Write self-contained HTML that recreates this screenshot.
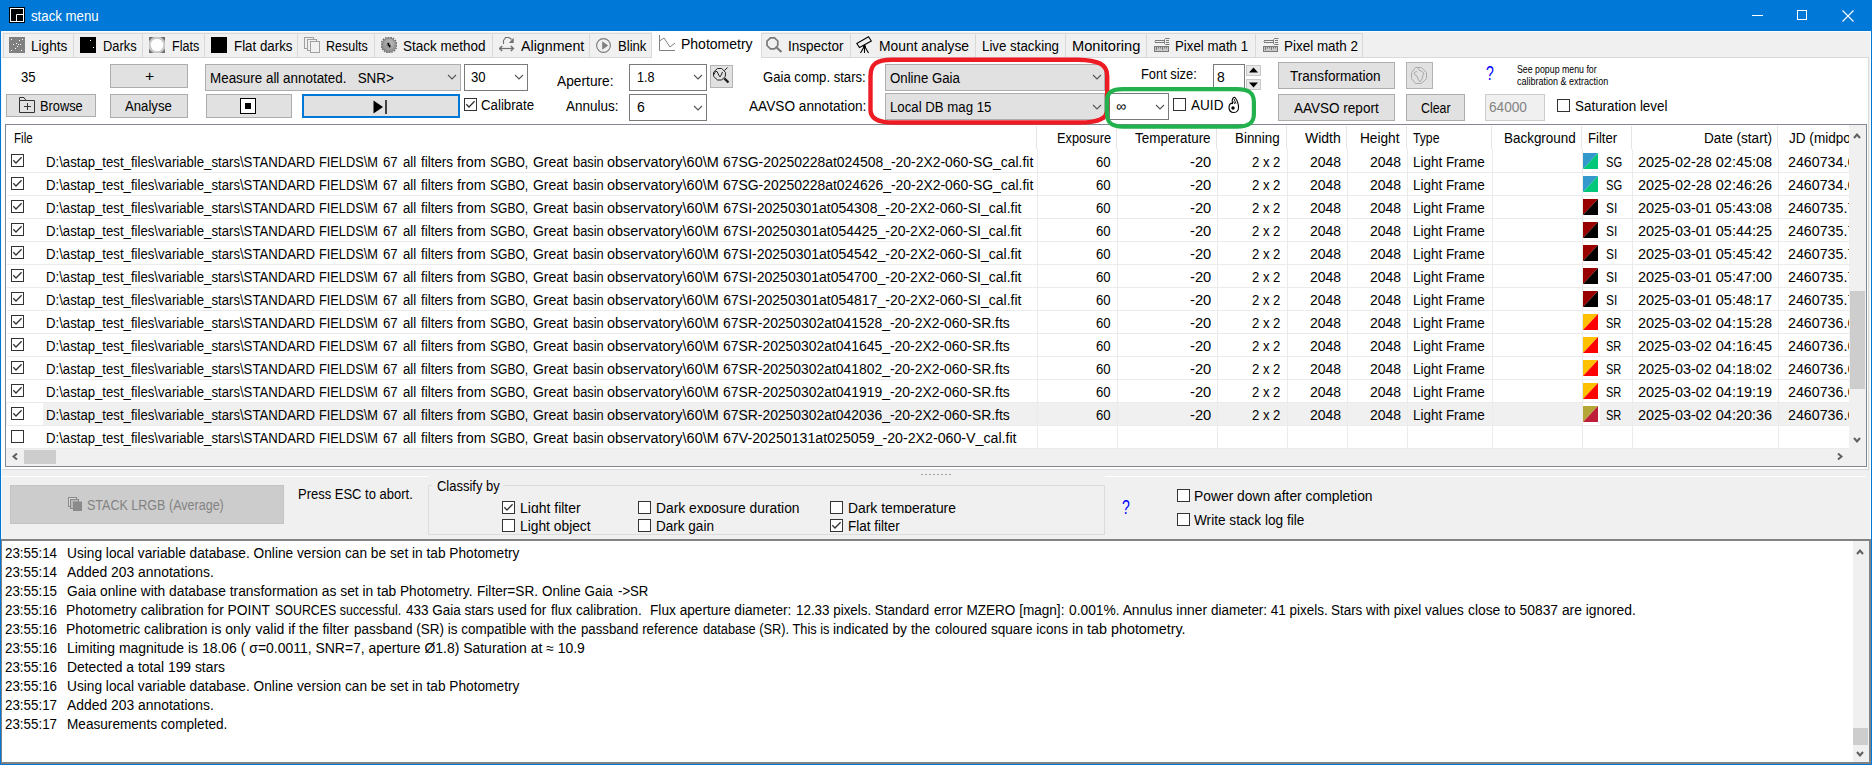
<!DOCTYPE html><html><head><meta charset="utf-8"><style>*{margin:0;padding:0}
html,body{width:1872px;height:765px;overflow:hidden;background:#f0f0f0;position:relative}
div,svg{position:absolute}
.t{white-space:pre;font-family:"Liberation Sans",sans-serif;line-height:normal;transform-origin:0 0}
</style></head><body><div style="left:0px;top:0px;width:1872px;height:31px;background:#0078d7;"></div>
<div style="left:0px;top:31px;width:1px;height:734px;background:#0078d7;"></div>
<div style="left:1871px;top:31px;width:1px;height:734px;background:#0078d7;"></div>
<div style="left:0px;top:764px;width:1872px;height:1px;background:#0078d7;"></div>
<div style="left:1px;top:31px;width:1870px;height:1px;background:#fbfbfb;"></div>
<div style="left:1px;top:31px;width:1px;height:733px;background:#f7f7f7;"></div>
<div style="left:1870px;top:31px;width:1px;height:733px;background:#fbfbfb;"></div>
<svg style="left:9px;top:7px;" width="16" height="16" viewBox="0 0 16 16"><rect x="0" y="0" width="16" height="16" fill="#000"/><rect x="1.5" y="1.5" width="13" height="13" fill="none" stroke="#fff" stroke-width="1"/><path d="M7.5 14.5V7.5H14.5" fill="none" stroke="#fff" stroke-width="1"/></svg>
<div class="t" style="left:31.00px;top:8px;font-size:14px;color:#fff;transform:scaleX(0.9444);">stack menu</div>
<div style="left:1752px;top:15px;width:11px;height:1px;background:#fff;"></div>
<div style="left:1797px;top:10px;width:10px;height:10px;border:1px solid #fff;box-sizing:border-box;"></div>
<svg style="left:1842px;top:10px;" width="12" height="12" viewBox="0 0 12 12"><path d="M0.5 0.5L11.5 11.5M11.5 0.5L0.5 11.5" stroke="#fff" stroke-width="1.1"/></svg>
<div style="left:3px;top:33px;width:71px;height:25px;background:#f0f0f0;border:1px solid #d9d9d9;box-sizing:border-box;"></div>
<div style="left:73px;top:33px;width:70px;height:25px;background:#f0f0f0;border:1px solid #d9d9d9;box-sizing:border-box;"></div>
<div style="left:142px;top:33px;width:63px;height:25px;background:#f0f0f0;border:1px solid #d9d9d9;box-sizing:border-box;"></div>
<div style="left:204px;top:33px;width:94px;height:25px;background:#f0f0f0;border:1px solid #d9d9d9;box-sizing:border-box;"></div>
<div style="left:297px;top:33px;width:78px;height:25px;background:#f0f0f0;border:1px solid #d9d9d9;box-sizing:border-box;"></div>
<div style="left:374px;top:33px;width:119px;height:25px;background:#f0f0f0;border:1px solid #d9d9d9;box-sizing:border-box;"></div>
<div style="left:492px;top:33px;width:98px;height:25px;background:#f0f0f0;border:1px solid #d9d9d9;box-sizing:border-box;"></div>
<div style="left:589px;top:33px;width:63px;height:25px;background:#f0f0f0;border:1px solid #d9d9d9;box-sizing:border-box;"></div>
<div style="left:761px;top:33px;width:90px;height:25px;background:#f0f0f0;border:1px solid #d9d9d9;box-sizing:border-box;"></div>
<div style="left:850px;top:33px;width:126px;height:25px;background:#f0f0f0;border:1px solid #d9d9d9;box-sizing:border-box;"></div>
<div style="left:975px;top:33px;width:91px;height:25px;background:#f0f0f0;border:1px solid #d9d9d9;box-sizing:border-box;"></div>
<div style="left:1065px;top:33px;width:82px;height:25px;background:#f0f0f0;border:1px solid #d9d9d9;box-sizing:border-box;"></div>
<div style="left:1146px;top:33px;width:110px;height:25px;background:#f0f0f0;border:1px solid #d9d9d9;box-sizing:border-box;"></div>
<div style="left:1255px;top:33px;width:108px;height:25px;background:#f0f0f0;border:1px solid #d9d9d9;box-sizing:border-box;"></div>
<div style="left:2px;top:57px;width:1867px;height:413px;background:#ffffff;"></div>
<div style="left:2px;top:57px;width:650px;height:1px;background:#d9d9d9;"></div>
<div style="left:761px;top:57px;width:1107px;height:1px;background:#d9d9d9;"></div>
<div style="left:1868px;top:57px;width:1px;height:413px;background:#d9d9d9;"></div>
<div style="left:2px;top:469px;width:1867px;height:1px;background:#d9d9d9;"></div>
<div style="left:652px;top:31px;width:109px;height:27px;background:#ffffff;"></div>
<div style="left:761px;top:33px;width:1px;height:25px;background:#d9d9d9;"></div>
<svg style="left:9px;top:37px;" width="16" height="16" viewBox="0 0 16 16"><rect width="16" height="16" fill="#808080"/><rect x="2" y="2" width="1" height="1" fill="#fff"/><rect x="13" y="2" width="1" height="1" fill="#fff"/><rect x="10" y="3" width="1" height="1" fill="#fff"/><rect x="7" y="6" width="1" height="1" fill="#fff"/><rect x="4" y="7" width="1" height="1" fill="#fff"/><rect x="9" y="7" width="1" height="1" fill="#fff"/><rect x="11" y="7" width="1" height="1" fill="#fff"/><rect x="8" y="9" width="1" height="1" fill="#fff"/><rect x="6" y="11" width="1" height="1" fill="#fff"/><rect x="2" y="13" width="1" height="1" fill="#fff"/><rect x="12" y="13" width="1" height="1" fill="#fff"/></svg>
<div class="t" style="left:31.00px;top:38px;font-size:14px;color:#000;transform:scaleX(0.9730);">Lights</div>
<svg style="left:80px;top:37px;" width="16" height="16" viewBox="0 0 16 16"><rect width="16" height="16" fill="#000"/><rect x="10" y="3" width="1" height="1" fill="#fff"/><rect x="13" y="10" width="1" height="1" fill="#fff"/></svg>
<div class="t" style="left:103.00px;top:38px;font-size:14px;color:#000;transform:scaleX(0.9189);">Darks</div>
<svg style="left:149px;top:37px;" width="16" height="16" viewBox="0 0 16 16"><rect width="16" height="16" fill="#6e6e6e"/><circle cx="8" cy="8" r="8.6" fill="#c6c6c6"/><circle cx="8" cy="8" r="6.3" fill="#fff"/></svg>
<div class="t" style="left:172.00px;top:38px;font-size:14px;color:#000;transform:scaleX(0.9000);">Flats</div>
<svg style="left:211px;top:37px;" width="16" height="16" viewBox="0 0 16 16"><rect width="16" height="16" fill="#000"/></svg>
<div class="t" style="left:234.00px;top:38px;font-size:14px;color:#000;transform:scaleX(0.9508);">Flat darks</div>
<svg style="left:304px;top:37px;" width="16" height="16" viewBox="0 0 16 16"><g fill="#f0f0f0" stroke="#a0a0a0" stroke-width="1"><rect x="0.5" y="0.5" width="9" height="11"/><rect x="3.5" y="2.5" width="9" height="11"/><rect x="6.5" y="4.5" width="9" height="11"/></g></svg>
<div class="t" style="left:326.00px;top:38px;font-size:14px;color:#000;transform:scaleX(0.8936);">Results</div>
<svg style="left:381px;top:37px;" width="16" height="16" viewBox="0 0 16 16"><defs><radialGradient id="gg" cx="0.55" cy="0.4" r="0.6"><stop offset="0" stop-color="#c4c4c4"/><stop offset="1" stop-color="#8a8a8a"/></radialGradient></defs><circle cx="8" cy="8" r="7.8" fill="none" stroke="#6a6a6a" stroke-width="1.4" stroke-dasharray="1.6 1.1"/><circle cx="8" cy="8" r="6.9" fill="url(#gg)"/><circle cx="8" cy="8" r="7" fill="none" stroke="#777" stroke-width="0.9"/><ellipse cx="7.6" cy="8" rx="2.3" ry="2.8" fill="#888"/><path d="M7 5.8L7.6 8.3L8.6 8.6L9 10.4" stroke="#000" stroke-width="1.4" fill="none"/></svg>
<div class="t" style="left:403.00px;top:38px;font-size:14px;color:#000;transform:scaleX(0.9651);">Stack method</div>
<svg style="left:499px;top:37px;" width="16" height="16" viewBox="0 0 16 16"><path d="M4.5 7V3.5L6 1.5L6.5 0.5H9.5L11.5 1.5L12.5 2.5" fill="none" stroke="#707070" stroke-width="1.1"/><path d="M14.7 0.8V5.9H9.8Z" fill="#707070"/><path d="M1 11.5H14" stroke="#707070" stroke-width="1.2"/><path d="M3.2 9L0.6 11.5L3.2 14M11.8 9L14.4 11.5L11.8 14" fill="none" stroke="#707070" stroke-width="1.5"/></svg>
<div class="t" style="left:521.00px;top:38px;font-size:14px;color:#000;transform:scaleX(1.0161);">Alignment</div>
<svg style="left:596px;top:37px;" width="16" height="17" viewBox="0 0 16 17"><circle cx="7.5" cy="8.5" r="6.9" fill="none" stroke="#7a7a7a" stroke-width="1.1"/><path d="M6.2 4.3L12.2 8.5L6.2 12.7Z" fill="#808080"/></svg>
<div class="t" style="left:618.00px;top:38px;font-size:14px;color:#000;transform:scaleX(0.9355);">Blink</div>
<svg style="left:659px;top:35px;" width="17" height="17" viewBox="0 0 17 17"><path d="M0.5 0V15.5H16" fill="none" stroke="#808080" stroke-width="1"/><path d="M0.5 6L5 3L11 12L16 8" fill="none" stroke="#808080" stroke-width="1"/></svg>
<div class="t" style="left:681.00px;top:36px;font-size:14px;color:#000;">Photometry</div>
<svg style="left:766px;top:37px;" width="17" height="17" viewBox="0 0 17 17"><path d="M4.5 0.8H8.5L11.8 4V8.5L8.5 11.8H4.5L1 8.5V4Z" fill="none" stroke="#7a7a7a" stroke-width="1.7"/><path d="M10.3 10.3L15.5 15" stroke="#7a7a7a" stroke-width="2.2"/></svg>
<div class="t" style="left:788.00px;top:38px;font-size:14px;color:#000;transform:scaleX(0.9655);">Inspector</div>
<svg style="left:856px;top:36px;" width="17" height="18" viewBox="0 0 17 18"><path d="M0.8 7.5L12.5 0.8L15.3 5L3.5 11.5Z" fill="none" stroke="#000" stroke-width="1.1"/><path d="M8.5 10V17M8.5 10L4.5 17M8.5 10L12.5 17" stroke="#000" stroke-width="1.1" fill="none"/><circle cx="8.5" cy="10.5" r="1.4" fill="#000"/></svg>
<div class="t" style="left:879.00px;top:38px;font-size:14px;color:#000;transform:scaleX(0.9890);">Mount analyse</div>
<div class="t" style="left:982.00px;top:38px;font-size:14px;color:#000;transform:scaleX(0.9506);">Live stacking</div>
<div class="t" style="left:1072.00px;top:38px;font-size:14px;color:#000;transform:scaleX(1.0462);">Monitoring</div>
<svg style="left:1154px;top:37px;" width="16" height="16" viewBox="0 0 16 16"><path d="M1 3.5H10.5M1 5.5H10.5" stroke="#7a7a7a" stroke-width="1"/><path d="M0.3 4.5L1.5 3.5V5.5Z" fill="#7a7a7a"/><path d="M15.5 1.5H11.5L10.5 2.5V6.5L11.5 7.5H15.5M12 3.5H15M12 5.5H15" fill="none" stroke="#7a7a7a" stroke-width="1"/><rect x="0.5" y="9.5" width="14" height="5" fill="#c8c8c8" stroke="#7a7a7a" stroke-width="1"/><path d="M2.5 10V13M4.5 10V11.5M6.5 10V11.5M8.5 10V13M10.5 10V11.5M12.5 10V11.5" stroke="#7a7a7a" stroke-width="1"/></svg>
<div class="t" style="left:1175.00px;top:38px;font-size:14px;color:#000;transform:scaleX(0.9481);">Pixel math 1</div>
<svg style="left:1263px;top:37px;" width="16" height="16" viewBox="0 0 16 16"><path d="M1 3.5H10.5M1 5.5H10.5" stroke="#7a7a7a" stroke-width="1"/><path d="M0.3 4.5L1.5 3.5V5.5Z" fill="#7a7a7a"/><path d="M15.5 1.5H11.5L10.5 2.5V6.5L11.5 7.5H15.5M12 3.5H15M12 5.5H15" fill="none" stroke="#7a7a7a" stroke-width="1"/><rect x="0.5" y="9.5" width="14" height="5" fill="#c8c8c8" stroke="#7a7a7a" stroke-width="1"/><path d="M2.5 10V13M4.5 10V11.5M6.5 10V11.5M8.5 10V13M10.5 10V11.5M12.5 10V11.5" stroke="#7a7a7a" stroke-width="1"/></svg>
<div class="t" style="left:1284.00px;top:38px;font-size:14px;color:#000;transform:scaleX(0.9610);">Pixel math 2</div>
<div class="t" style="left:21.00px;top:69px;font-size:14px;color:#000;transform:scaleX(0.9375);">35</div>
<div style="left:110px;top:64px;width:78px;height:24px;background:#e1e1e1;border:1px solid #adadad;box-sizing:border-box;"></div>
<div class="t" style="left:145.00px;top:68px;font-size:14px;color:#000;transform:scaleX(1.1250);">+</div>
<div style="left:205px;top:64px;width:256px;height:27px;background:#e1e1e1;border:1px solid #adadad;box-sizing:border-box;"></div>
<div class="t" style="left:210.00px;top:70px;font-size:14px;color:#000;transform:scaleX(0.9583);">Measure all annotated.   SNR&gt;</div>
<svg style="left:447.0px;top:74.0px;" width="10" height="6" viewBox="0 0 10 6"><path d="M1 1L5.0 5L9 1" fill="none" stroke="#555" stroke-width="1.1"/></svg>
<div style="left:464px;top:64px;width:64px;height:27px;background:#fff;border:1px solid #7a7a7a;box-sizing:border-box;"></div>
<div class="t" style="left:471.00px;top:69px;font-size:14px;color:#000;transform:scaleX(0.9375);">30</div>
<svg style="left:514.0px;top:74.0px;" width="10" height="6" viewBox="0 0 10 6"><path d="M1 1L5.0 5L9 1" fill="none" stroke="#555" stroke-width="1.1"/></svg>
<div style="left:6px;top:94px;width:90px;height:23px;background:#e1e1e1;border:1px solid #adadad;box-sizing:border-box;"></div>
<svg style="left:19px;top:96px;" width="17" height="18" viewBox="0 0 17 18"><path d="M0.5 4.5V1.5H5L7 4.5M0.5 4.5H15.5V16.5H0.5Z" fill="none" stroke="#333" stroke-width="1"/><path d="M8.5 7V14M5 10.5H12" stroke="#333" stroke-width="1"/></svg>
<div class="t" style="left:40.00px;top:98px;font-size:14px;color:#000;transform:scaleX(0.9149);">Browse</div>
<div style="left:110px;top:94px;width:78px;height:24px;background:#e1e1e1;border:1px solid #adadad;box-sizing:border-box;"></div>
<div class="t" style="left:125.00px;top:98px;font-size:14px;color:#000;transform:scaleX(0.9400);">Analyse</div>
<div style="left:206px;top:94px;width:86px;height:24px;background:#e1e1e1;border:1px solid #adadad;box-sizing:border-box;"></div>
<svg style="left:240px;top:98px;" width="16" height="16" viewBox="0 0 16 16"><rect x="0.5" y="0.5" width="15" height="15" fill="#fff" stroke="#000" stroke-width="1"/><rect x="5" y="5" width="6" height="6" fill="#000"/></svg>
<div style="left:302px;top:94px;width:158px;height:24px;background:#e1e1e1;border:2px solid #0078d7;box-sizing:border-box;"></div>
<svg style="left:373px;top:100px;" width="15" height="14" viewBox="0 0 15 14"><path d="M0.5 0.5L10 7L0.5 13.5Z" fill="#000"/><rect x="12.3" y="0" width="1.4" height="14" fill="#000"/></svg>
<div style="left:464px;top:98px;width:13px;height:13px;background:#fff;border:1px solid #333;box-sizing:border-box;"></div>
<svg style="left:464px;top:98px;" width="13" height="13" viewBox="0 0 13 13"><path d="M2.3 6.2L5 9L10.6 3.3" fill="none" stroke="#333" stroke-width="1.3"/></svg>
<div class="t" style="left:481.00px;top:97px;font-size:14px;color:#000;transform:scaleX(0.9464);">Calibrate</div>
<div class="t" style="left:557.00px;top:73px;font-size:14px;color:#000;transform:scaleX(0.9828);">Aperture:</div>
<div class="t" style="left:566.00px;top:98px;font-size:14px;color:#000;transform:scaleX(0.9630);">Annulus:</div>
<div style="left:629px;top:64px;width:78px;height:27px;background:#fff;border:1px solid #7a7a7a;box-sizing:border-box;"></div>
<div class="t" style="left:637.00px;top:69px;font-size:14px;color:#000;transform:scaleX(0.9000);">1.8</div>
<svg style="left:693.0px;top:74.0px;" width="10" height="6" viewBox="0 0 10 6"><path d="M1 1L5.0 5L9 1" fill="none" stroke="#555" stroke-width="1.1"/></svg>
<div style="left:629px;top:94px;width:78px;height:27px;background:#fff;border:1px solid #7a7a7a;box-sizing:border-box;"></div>
<div class="t" style="left:637.00px;top:99px;font-size:14px;color:#000;">6</div>
<svg style="left:693.0px;top:105.0px;" width="10" height="6" viewBox="0 0 10 6"><path d="M1 1L5.0 5L9 1" fill="none" stroke="#555" stroke-width="1.1"/></svg>
<div style="left:710px;top:65px;width:23px;height:23px;background:#e1e1e1;border:1px solid #b4b4b4;box-sizing:border-box;"></div>
<svg style="left:710px;top:65px;" width="23" height="23" viewBox="0 0 23 23"><path d="M7.4 3.5H11.7L15.4 7.3V11.2L11.7 15H7.4L3.5 11.2V7.3Z" fill="none" stroke="#222" stroke-width="1"/><path d="M14.5 5.5L17.5 2.5" stroke="#222" stroke-width="1"/><path d="M14.3 13.3L18.5 17.5" stroke="#222" stroke-width="2.4"/><path d="M4 9.5L5.5 6.5H7L9.5 11.5H10.5L12.5 7" fill="none" stroke="#222" stroke-width="1"/></svg>
<div class="t" style="left:763.00px;top:69px;font-size:14px;color:#000;transform:scaleX(0.9364);">Gaia comp. stars:</div>
<div class="t" style="left:749.00px;top:98px;font-size:14px;color:#000;transform:scaleX(0.9750);">AAVSO annotation:</div>
<div style="left:885px;top:64px;width:220px;height:27px;background:#e1e1e1;border:1px solid #adadad;box-sizing:border-box;"></div>
<div class="t" style="left:890.00px;top:70px;font-size:14px;color:#000;transform:scaleX(0.9459);">Online Gaia</div>
<svg style="left:1092.0px;top:74.0px;" width="10" height="6" viewBox="0 0 10 6"><path d="M1 1L5.0 5L9 1" fill="none" stroke="#555" stroke-width="1.1"/></svg>
<div style="left:885px;top:93px;width:220px;height:27px;background:#e1e1e1;border:1px solid #adadad;box-sizing:border-box;"></div>
<div class="t" style="left:890.00px;top:99px;font-size:14px;color:#000;transform:scaleX(0.9444);">Local DB mag 15</div>
<svg style="left:1092.0px;top:104.0px;" width="10" height="6" viewBox="0 0 10 6"><path d="M1 1L5.0 5L9 1" fill="none" stroke="#555" stroke-width="1.1"/></svg>
<div style="left:1109px;top:93px;width:60px;height:27px;background:#fff;border:1px solid #7a7a7a;box-sizing:border-box;"></div>
<div class="t" style="left:1116.00px;top:98px;font-size:14px;color:#000;">∞</div>
<svg style="left:1155.0px;top:104.0px;" width="10" height="6" viewBox="0 0 10 6"><path d="M1 1L5.0 5L9 1" fill="none" stroke="#555" stroke-width="1.1"/></svg>
<div style="left:1173px;top:98px;width:13px;height:13px;background:#fff;border:1px solid #333;box-sizing:border-box;"></div>
<div class="t" style="left:1191.00px;top:97px;font-size:14px;color:#000;transform:scaleX(0.9697);">AUID</div>
<svg style="left:1227px;top:96px;" width="14" height="18" viewBox="0 0 14 18"><path d="M5.5 7.5C3 7 2 9 2 11.5C2 14.5 4 16.5 7 16.5C10 16.5 11.5 14 11.5 11.5C11.5 8 10 4 8 1.5C7 1 6 2 5.5 3C5 4 5.2 6 5.5 7.5Z" fill="#fff" stroke="#000" stroke-width="1.1"/><path d="M7 3L9 7.5M6.5 5.5L8 8" stroke="#000" stroke-width="0.9"/><circle cx="6" cy="12" r="1.7" fill="#000"/></svg>
<div class="t" style="left:1141.00px;top:66px;font-size:14px;color:#000;transform:scaleX(0.9180);">Font size:</div>
<div style="left:1213px;top:64px;width:32px;height:27px;background:#fff;border:1px solid #7a7a7a;box-sizing:border-box;"></div>
<div class="t" style="left:1217.00px;top:69px;font-size:14px;color:#000;">8</div>
<div style="left:1246px;top:65px;width:15px;height:11px;background:#e8e8e8;border:1px solid #c8c8c8;box-sizing:border-box;"></div>
<svg style="left:1249px;top:67px;" width="9" height="6" viewBox="0 0 9 6"><path d="M0 5.5L4.5 0.5L9 5.5Z" fill="#000"/></svg>
<div style="left:1246px;top:79px;width:15px;height:11px;background:#e8e8e8;border:1px solid #c8c8c8;box-sizing:border-box;"></div>
<svg style="left:1249px;top:82px;" width="9" height="6" viewBox="0 0 9 6"><path d="M0 0.5L4.5 5.5L9 0.5Z" fill="#000"/></svg>
<div style="left:1278px;top:62px;width:117px;height:27px;background:#e1e1e1;border:1px solid #adadad;box-sizing:border-box;"></div>
<div class="t" style="left:1290.00px;top:68px;font-size:14px;color:#000;transform:scaleX(0.9681);">Transformation</div>
<div style="left:1278px;top:94px;width:117px;height:27px;background:#e1e1e1;border:1px solid #adadad;box-sizing:border-box;"></div>
<div class="t" style="left:1294.00px;top:100px;font-size:14px;color:#000;transform:scaleX(0.9659);">AAVSO report</div>
<div style="left:1406px;top:62px;width:27px;height:27px;background:#e1e1e1;border:1px solid #b4b4b4;box-sizing:border-box;"></div>
<svg style="left:1406px;top:62px;" width="27" height="27" viewBox="0 0 27 27"><g fill="none" stroke="#aaaaaa" stroke-width="1"><path d="M9.5 5.5H15.5L20.5 10.5V16.5L15.5 21.5H9.5L5.5 16.5V10.5Z"/><path d="M12 6L13 8L15 9L18 11L17 13L16 17L14 20L12 17L11 14L9 13L8 11L9 10L11 9.5"/></g></svg>
<div style="left:1406px;top:94px;width:59px;height:27px;background:#e1e1e1;border:1px solid #adadad;box-sizing:border-box;"></div>
<div class="t" style="left:1421.00px;top:100px;font-size:14px;color:#000;transform:scaleX(0.8824);">Clear</div>
<div class="t" style="left:1486.00px;top:61px;font-size:21px;color:#0000ff;transform:scaleX(0.6667);">?</div>
<div class="t" style="left:1517.00px;top:64px;font-size:10px;color:#000;transform:scaleX(0.8791);">See popup menu for</div>
<div class="t" style="left:1517.00px;top:76px;font-size:10px;color:#000;transform:scaleX(0.9010);">calibration &amp; extraction</div>
<div style="left:1485px;top:94px;width:60px;height:27px;background:#f0f0f0;border:1px solid #cccccc;box-sizing:border-box;"></div>
<div class="t" style="left:1489.00px;top:99px;font-size:14px;color:#838383;transform:scaleX(0.9744);">64000</div>
<div style="left:1557px;top:99px;width:13px;height:13px;background:#fff;border:1px solid #333;box-sizing:border-box;"></div>
<div class="t" style="left:1575.00px;top:98px;font-size:14px;color:#000;transform:scaleX(0.9583);">Saturation level</div>
<div style="left:5px;top:124px;width:1862px;height:343px;background:#ffffff;border:1px solid #828790;box-sizing:border-box;"></div>
<div style="left:1036px;top:126px;width:1px;height:23px;background:#e5e5e5;"></div>
<div style="left:1116px;top:126px;width:1px;height:23px;background:#e5e5e5;"></div>
<div style="left:1216px;top:126px;width:1px;height:23px;background:#e5e5e5;"></div>
<div style="left:1286px;top:126px;width:1px;height:23px;background:#e5e5e5;"></div>
<div style="left:1346px;top:126px;width:1px;height:23px;background:#e5e5e5;"></div>
<div style="left:1406px;top:126px;width:1px;height:23px;background:#e5e5e5;"></div>
<div style="left:1491px;top:126px;width:1px;height:23px;background:#e5e5e5;"></div>
<div style="left:1581px;top:126px;width:1px;height:23px;background:#e5e5e5;"></div>
<div style="left:1631px;top:126px;width:1px;height:23px;background:#e5e5e5;"></div>
<div style="left:1777px;top:126px;width:1px;height:23px;background:#e5e5e5;"></div>
<div class="t" style="left:14.00px;top:130px;font-size:14px;color:#000;transform:scaleX(0.8261);">File</div>
<div class="t" style="left:1057.00px;top:130px;font-size:14px;color:#000;transform:scaleX(0.9153);">Exposure</div>
<div class="t" style="left:1135.00px;top:130px;font-size:14px;color:#000;transform:scaleX(0.9620);">Temperature</div>
<div class="t" style="left:1235.00px;top:130px;font-size:14px;color:#000;transform:scaleX(0.9574);">Binning</div>
<div class="t" style="left:1305.00px;top:130px;font-size:14px;color:#000;">Width</div>
<div class="t" style="left:1360.00px;top:130px;font-size:14px;color:#000;transform:scaleX(0.9756);">Height</div>
<div class="t" style="left:1413.00px;top:130px;font-size:14px;color:#000;transform:scaleX(0.8710);">Type</div>
<div class="t" style="left:1504.00px;top:130px;font-size:14px;color:#000;transform:scaleX(0.9600);">Background</div>
<div class="t" style="left:1588.00px;top:130px;font-size:14px;color:#000;transform:scaleX(0.9355);">Filter</div>
<div class="t" style="left:1704.00px;top:130px;font-size:14px;color:#000;transform:scaleX(0.9714);">Date (start)</div>
<div style="left:6px;top:402px;width:1843px;height:23px;background:#f0f0f0;"></div>
<div style="left:7px;top:403px;width:36px;height:22px;background:#ffffff;"></div>
<div style="left:7px;top:172px;width:1842px;height:1px;background:#ebebeb;"></div>
<div style="left:11px;top:154px;width:13px;height:13px;background:#fff;border:1px solid #333;box-sizing:border-box;"></div>
<svg style="left:11px;top:154px;" width="13" height="13" viewBox="0 0 13 13"><path d="M2.3 6.2L5 9L10.6 3.3" fill="none" stroke="#333" stroke-width="1.3"/></svg>
<div class="t" style="left:45.80px;top:154px;font-size:14px;color:#000;transform:scaleX(0.9406);">D:\astap_test_files\variable_stars\STANDARD</div>
<div class="t" style="left:319.40px;top:154px;font-size:14px;color:#000;transform:scaleX(0.9123);">FIELDS\M</div>
<div class="t" style="left:383.30px;top:154px;font-size:14px;color:#000;transform:scaleX(0.9437);">67</div>
<div class="t" style="left:403.00px;top:154px;font-size:14px;color:#000;transform:scaleX(0.9429);">all</div>
<div class="t" style="left:420.80px;top:154px;font-size:14px;color:#000;transform:scaleX(0.9576);">filters</div>
<div class="t" style="left:457.00px;top:154px;font-size:14px;color:#000;transform:scaleX(1.0286);">from</div>
<div class="t" style="left:490.40px;top:154px;font-size:14px;color:#000;transform:scaleX(0.8614);">SGBO,</div>
<div class="t" style="left:532.90px;top:154px;font-size:14px;color:#000;">Great</div>
<div class="t" style="left:572.60px;top:154px;font-size:14px;color:#000;transform:scaleX(0.9152);">basin</div>
<div class="t" style="left:607.40px;top:154px;font-size:14px;color:#000;transform:scaleX(1.0333);">observatory\60\M</div>
<div class="t" style="left:723.30px;top:154px;font-size:14px;color:#000;transform:scaleX(0.9942);">67SG-20250228at024508_-20-2X2-060-SG_cal.fit</div>
<div class="t" style="left:1096.00px;top:154px;font-size:14px;color:#000;transform:scaleX(0.9375);">60</div>
<div class="t" style="left:1190.00px;top:154px;font-size:14px;color:#000;transform:scaleX(1.0500);">-20</div>
<div class="t" style="left:1252.00px;top:154px;font-size:14px;color:#000;transform:scaleX(0.9355);">2 x 2</div>
<div class="t" style="left:1310.00px;top:154px;font-size:14px;color:#000;">2048</div>
<div class="t" style="left:1370.00px;top:154px;font-size:14px;color:#000;">2048</div>
<div class="t" style="left:1413.00px;top:154px;font-size:14px;color:#000;transform:scaleX(0.9600);">Light Frame</div>
<svg style="left:1583px;top:153px;" width="15" height="16" viewBox="0 0 15 16"><path d="M0 0H15L0 16Z" fill="#3399cc"/><path d="M15 0V16H0Z" fill="#00c77a"/></svg>
<div class="t" style="left:1606.00px;top:154px;font-size:14px;color:#000;transform:scaleX(0.8000);">SG</div>
<div class="t" style="left:1638.00px;top:154px;font-size:14px;color:#000;transform:scaleX(1.0308);">2025-02-28 02:45:08</div>
<div style="left:1778px;top:149px;width:71px;height:23px;overflow:hidden">
<div class="t" style="left:10px;top:5px;font-size:14px;transform:scaleX(1.0172)">2460734.6</div></div>
<div style="left:7px;top:195px;width:1842px;height:1px;background:#ebebeb;"></div>
<div style="left:11px;top:177px;width:13px;height:13px;background:#fff;border:1px solid #333;box-sizing:border-box;"></div>
<svg style="left:11px;top:177px;" width="13" height="13" viewBox="0 0 13 13"><path d="M2.3 6.2L5 9L10.6 3.3" fill="none" stroke="#333" stroke-width="1.3"/></svg>
<div class="t" style="left:45.80px;top:177px;font-size:14px;color:#000;transform:scaleX(0.9406);">D:\astap_test_files\variable_stars\STANDARD</div>
<div class="t" style="left:319.40px;top:177px;font-size:14px;color:#000;transform:scaleX(0.9123);">FIELDS\M</div>
<div class="t" style="left:383.30px;top:177px;font-size:14px;color:#000;transform:scaleX(0.9437);">67</div>
<div class="t" style="left:403.00px;top:177px;font-size:14px;color:#000;transform:scaleX(0.9429);">all</div>
<div class="t" style="left:420.80px;top:177px;font-size:14px;color:#000;transform:scaleX(0.9576);">filters</div>
<div class="t" style="left:457.00px;top:177px;font-size:14px;color:#000;transform:scaleX(1.0286);">from</div>
<div class="t" style="left:490.40px;top:177px;font-size:14px;color:#000;transform:scaleX(0.8614);">SGBO,</div>
<div class="t" style="left:532.90px;top:177px;font-size:14px;color:#000;">Great</div>
<div class="t" style="left:572.60px;top:177px;font-size:14px;color:#000;transform:scaleX(0.9152);">basin</div>
<div class="t" style="left:607.40px;top:177px;font-size:14px;color:#000;transform:scaleX(1.0333);">observatory\60\M</div>
<div class="t" style="left:723.30px;top:177px;font-size:14px;color:#000;transform:scaleX(0.9942);">67SG-20250228at024626_-20-2X2-060-SG_cal.fit</div>
<div class="t" style="left:1096.00px;top:177px;font-size:14px;color:#000;transform:scaleX(0.9375);">60</div>
<div class="t" style="left:1190.00px;top:177px;font-size:14px;color:#000;transform:scaleX(1.0500);">-20</div>
<div class="t" style="left:1252.00px;top:177px;font-size:14px;color:#000;transform:scaleX(0.9355);">2 x 2</div>
<div class="t" style="left:1310.00px;top:177px;font-size:14px;color:#000;">2048</div>
<div class="t" style="left:1370.00px;top:177px;font-size:14px;color:#000;">2048</div>
<div class="t" style="left:1413.00px;top:177px;font-size:14px;color:#000;transform:scaleX(0.9600);">Light Frame</div>
<svg style="left:1583px;top:176px;" width="15" height="16" viewBox="0 0 15 16"><path d="M0 0H15L0 16Z" fill="#3399cc"/><path d="M15 0V16H0Z" fill="#00c77a"/></svg>
<div class="t" style="left:1606.00px;top:177px;font-size:14px;color:#000;transform:scaleX(0.8000);">SG</div>
<div class="t" style="left:1638.00px;top:177px;font-size:14px;color:#000;transform:scaleX(1.0308);">2025-02-28 02:46:26</div>
<div style="left:1778px;top:172px;width:71px;height:23px;overflow:hidden">
<div class="t" style="left:10px;top:5px;font-size:14px;transform:scaleX(1.0172)">2460734.6</div></div>
<div style="left:7px;top:218px;width:1842px;height:1px;background:#ebebeb;"></div>
<div style="left:11px;top:200px;width:13px;height:13px;background:#fff;border:1px solid #333;box-sizing:border-box;"></div>
<svg style="left:11px;top:200px;" width="13" height="13" viewBox="0 0 13 13"><path d="M2.3 6.2L5 9L10.6 3.3" fill="none" stroke="#333" stroke-width="1.3"/></svg>
<div class="t" style="left:45.80px;top:200px;font-size:14px;color:#000;transform:scaleX(0.9406);">D:\astap_test_files\variable_stars\STANDARD</div>
<div class="t" style="left:319.40px;top:200px;font-size:14px;color:#000;transform:scaleX(0.9123);">FIELDS\M</div>
<div class="t" style="left:383.30px;top:200px;font-size:14px;color:#000;transform:scaleX(0.9437);">67</div>
<div class="t" style="left:403.00px;top:200px;font-size:14px;color:#000;transform:scaleX(0.9429);">all</div>
<div class="t" style="left:420.80px;top:200px;font-size:14px;color:#000;transform:scaleX(0.9576);">filters</div>
<div class="t" style="left:457.00px;top:200px;font-size:14px;color:#000;transform:scaleX(1.0286);">from</div>
<div class="t" style="left:490.40px;top:200px;font-size:14px;color:#000;transform:scaleX(0.8614);">SGBO,</div>
<div class="t" style="left:532.90px;top:200px;font-size:14px;color:#000;">Great</div>
<div class="t" style="left:572.60px;top:200px;font-size:14px;color:#000;transform:scaleX(0.9152);">basin</div>
<div class="t" style="left:607.40px;top:200px;font-size:14px;color:#000;transform:scaleX(1.0333);">observatory\60\M</div>
<div class="t" style="left:723.30px;top:200px;font-size:14px;color:#000;">67SI-20250301at054308_-20-2X2-060-SI_cal.fit</div>
<div class="t" style="left:1096.00px;top:200px;font-size:14px;color:#000;transform:scaleX(0.9375);">60</div>
<div class="t" style="left:1190.00px;top:200px;font-size:14px;color:#000;transform:scaleX(1.0500);">-20</div>
<div class="t" style="left:1252.00px;top:200px;font-size:14px;color:#000;transform:scaleX(0.9355);">2 x 2</div>
<div class="t" style="left:1310.00px;top:200px;font-size:14px;color:#000;">2048</div>
<div class="t" style="left:1370.00px;top:200px;font-size:14px;color:#000;">2048</div>
<div class="t" style="left:1413.00px;top:200px;font-size:14px;color:#000;transform:scaleX(0.9600);">Light Frame</div>
<svg style="left:1583px;top:199px;" width="15" height="16" viewBox="0 0 15 16"><path d="M0 0H15L0 16Z" fill="#990000"/><path d="M15 0V16H0Z" fill="#000000"/></svg>
<div class="t" style="left:1606.00px;top:200px;font-size:14px;color:#000;transform:scaleX(0.8462);">SI</div>
<div class="t" style="left:1638.00px;top:200px;font-size:14px;color:#000;transform:scaleX(1.0308);">2025-03-01 05:43:08</div>
<div style="left:1778px;top:195px;width:71px;height:23px;overflow:hidden">
<div class="t" style="left:10px;top:5px;font-size:14px;transform:scaleX(1.0172)">2460735.7</div></div>
<div style="left:7px;top:241px;width:1842px;height:1px;background:#ebebeb;"></div>
<div style="left:11px;top:223px;width:13px;height:13px;background:#fff;border:1px solid #333;box-sizing:border-box;"></div>
<svg style="left:11px;top:223px;" width="13" height="13" viewBox="0 0 13 13"><path d="M2.3 6.2L5 9L10.6 3.3" fill="none" stroke="#333" stroke-width="1.3"/></svg>
<div class="t" style="left:45.80px;top:223px;font-size:14px;color:#000;transform:scaleX(0.9406);">D:\astap_test_files\variable_stars\STANDARD</div>
<div class="t" style="left:319.40px;top:223px;font-size:14px;color:#000;transform:scaleX(0.9123);">FIELDS\M</div>
<div class="t" style="left:383.30px;top:223px;font-size:14px;color:#000;transform:scaleX(0.9437);">67</div>
<div class="t" style="left:403.00px;top:223px;font-size:14px;color:#000;transform:scaleX(0.9429);">all</div>
<div class="t" style="left:420.80px;top:223px;font-size:14px;color:#000;transform:scaleX(0.9576);">filters</div>
<div class="t" style="left:457.00px;top:223px;font-size:14px;color:#000;transform:scaleX(1.0286);">from</div>
<div class="t" style="left:490.40px;top:223px;font-size:14px;color:#000;transform:scaleX(0.8614);">SGBO,</div>
<div class="t" style="left:532.90px;top:223px;font-size:14px;color:#000;">Great</div>
<div class="t" style="left:572.60px;top:223px;font-size:14px;color:#000;transform:scaleX(0.9152);">basin</div>
<div class="t" style="left:607.40px;top:223px;font-size:14px;color:#000;transform:scaleX(1.0333);">observatory\60\M</div>
<div class="t" style="left:723.30px;top:223px;font-size:14px;color:#000;">67SI-20250301at054425_-20-2X2-060-SI_cal.fit</div>
<div class="t" style="left:1096.00px;top:223px;font-size:14px;color:#000;transform:scaleX(0.9375);">60</div>
<div class="t" style="left:1190.00px;top:223px;font-size:14px;color:#000;transform:scaleX(1.0500);">-20</div>
<div class="t" style="left:1252.00px;top:223px;font-size:14px;color:#000;transform:scaleX(0.9355);">2 x 2</div>
<div class="t" style="left:1310.00px;top:223px;font-size:14px;color:#000;">2048</div>
<div class="t" style="left:1370.00px;top:223px;font-size:14px;color:#000;">2048</div>
<div class="t" style="left:1413.00px;top:223px;font-size:14px;color:#000;transform:scaleX(0.9600);">Light Frame</div>
<svg style="left:1583px;top:222px;" width="15" height="16" viewBox="0 0 15 16"><path d="M0 0H15L0 16Z" fill="#990000"/><path d="M15 0V16H0Z" fill="#000000"/></svg>
<div class="t" style="left:1606.00px;top:223px;font-size:14px;color:#000;transform:scaleX(0.8462);">SI</div>
<div class="t" style="left:1638.00px;top:223px;font-size:14px;color:#000;transform:scaleX(1.0308);">2025-03-01 05:44:25</div>
<div style="left:1778px;top:218px;width:71px;height:23px;overflow:hidden">
<div class="t" style="left:10px;top:5px;font-size:14px;transform:scaleX(1.0172)">2460735.7</div></div>
<div style="left:7px;top:264px;width:1842px;height:1px;background:#ebebeb;"></div>
<div style="left:11px;top:246px;width:13px;height:13px;background:#fff;border:1px solid #333;box-sizing:border-box;"></div>
<svg style="left:11px;top:246px;" width="13" height="13" viewBox="0 0 13 13"><path d="M2.3 6.2L5 9L10.6 3.3" fill="none" stroke="#333" stroke-width="1.3"/></svg>
<div class="t" style="left:45.80px;top:246px;font-size:14px;color:#000;transform:scaleX(0.9406);">D:\astap_test_files\variable_stars\STANDARD</div>
<div class="t" style="left:319.40px;top:246px;font-size:14px;color:#000;transform:scaleX(0.9123);">FIELDS\M</div>
<div class="t" style="left:383.30px;top:246px;font-size:14px;color:#000;transform:scaleX(0.9437);">67</div>
<div class="t" style="left:403.00px;top:246px;font-size:14px;color:#000;transform:scaleX(0.9429);">all</div>
<div class="t" style="left:420.80px;top:246px;font-size:14px;color:#000;transform:scaleX(0.9576);">filters</div>
<div class="t" style="left:457.00px;top:246px;font-size:14px;color:#000;transform:scaleX(1.0286);">from</div>
<div class="t" style="left:490.40px;top:246px;font-size:14px;color:#000;transform:scaleX(0.8614);">SGBO,</div>
<div class="t" style="left:532.90px;top:246px;font-size:14px;color:#000;">Great</div>
<div class="t" style="left:572.60px;top:246px;font-size:14px;color:#000;transform:scaleX(0.9152);">basin</div>
<div class="t" style="left:607.40px;top:246px;font-size:14px;color:#000;transform:scaleX(1.0333);">observatory\60\M</div>
<div class="t" style="left:723.30px;top:246px;font-size:14px;color:#000;">67SI-20250301at054542_-20-2X2-060-SI_cal.fit</div>
<div class="t" style="left:1096.00px;top:246px;font-size:14px;color:#000;transform:scaleX(0.9375);">60</div>
<div class="t" style="left:1190.00px;top:246px;font-size:14px;color:#000;transform:scaleX(1.0500);">-20</div>
<div class="t" style="left:1252.00px;top:246px;font-size:14px;color:#000;transform:scaleX(0.9355);">2 x 2</div>
<div class="t" style="left:1310.00px;top:246px;font-size:14px;color:#000;">2048</div>
<div class="t" style="left:1370.00px;top:246px;font-size:14px;color:#000;">2048</div>
<div class="t" style="left:1413.00px;top:246px;font-size:14px;color:#000;transform:scaleX(0.9600);">Light Frame</div>
<svg style="left:1583px;top:245px;" width="15" height="16" viewBox="0 0 15 16"><path d="M0 0H15L0 16Z" fill="#990000"/><path d="M15 0V16H0Z" fill="#000000"/></svg>
<div class="t" style="left:1606.00px;top:246px;font-size:14px;color:#000;transform:scaleX(0.8462);">SI</div>
<div class="t" style="left:1638.00px;top:246px;font-size:14px;color:#000;transform:scaleX(1.0308);">2025-03-01 05:45:42</div>
<div style="left:1778px;top:241px;width:71px;height:23px;overflow:hidden">
<div class="t" style="left:10px;top:5px;font-size:14px;transform:scaleX(1.0172)">2460735.7</div></div>
<div style="left:7px;top:287px;width:1842px;height:1px;background:#ebebeb;"></div>
<div style="left:11px;top:269px;width:13px;height:13px;background:#fff;border:1px solid #333;box-sizing:border-box;"></div>
<svg style="left:11px;top:269px;" width="13" height="13" viewBox="0 0 13 13"><path d="M2.3 6.2L5 9L10.6 3.3" fill="none" stroke="#333" stroke-width="1.3"/></svg>
<div class="t" style="left:45.80px;top:269px;font-size:14px;color:#000;transform:scaleX(0.9406);">D:\astap_test_files\variable_stars\STANDARD</div>
<div class="t" style="left:319.40px;top:269px;font-size:14px;color:#000;transform:scaleX(0.9123);">FIELDS\M</div>
<div class="t" style="left:383.30px;top:269px;font-size:14px;color:#000;transform:scaleX(0.9437);">67</div>
<div class="t" style="left:403.00px;top:269px;font-size:14px;color:#000;transform:scaleX(0.9429);">all</div>
<div class="t" style="left:420.80px;top:269px;font-size:14px;color:#000;transform:scaleX(0.9576);">filters</div>
<div class="t" style="left:457.00px;top:269px;font-size:14px;color:#000;transform:scaleX(1.0286);">from</div>
<div class="t" style="left:490.40px;top:269px;font-size:14px;color:#000;transform:scaleX(0.8614);">SGBO,</div>
<div class="t" style="left:532.90px;top:269px;font-size:14px;color:#000;">Great</div>
<div class="t" style="left:572.60px;top:269px;font-size:14px;color:#000;transform:scaleX(0.9152);">basin</div>
<div class="t" style="left:607.40px;top:269px;font-size:14px;color:#000;transform:scaleX(1.0333);">observatory\60\M</div>
<div class="t" style="left:723.30px;top:269px;font-size:14px;color:#000;">67SI-20250301at054700_-20-2X2-060-SI_cal.fit</div>
<div class="t" style="left:1096.00px;top:269px;font-size:14px;color:#000;transform:scaleX(0.9375);">60</div>
<div class="t" style="left:1190.00px;top:269px;font-size:14px;color:#000;transform:scaleX(1.0500);">-20</div>
<div class="t" style="left:1252.00px;top:269px;font-size:14px;color:#000;transform:scaleX(0.9355);">2 x 2</div>
<div class="t" style="left:1310.00px;top:269px;font-size:14px;color:#000;">2048</div>
<div class="t" style="left:1370.00px;top:269px;font-size:14px;color:#000;">2048</div>
<div class="t" style="left:1413.00px;top:269px;font-size:14px;color:#000;transform:scaleX(0.9600);">Light Frame</div>
<svg style="left:1583px;top:268px;" width="15" height="16" viewBox="0 0 15 16"><path d="M0 0H15L0 16Z" fill="#990000"/><path d="M15 0V16H0Z" fill="#000000"/></svg>
<div class="t" style="left:1606.00px;top:269px;font-size:14px;color:#000;transform:scaleX(0.8462);">SI</div>
<div class="t" style="left:1638.00px;top:269px;font-size:14px;color:#000;transform:scaleX(1.0308);">2025-03-01 05:47:00</div>
<div style="left:1778px;top:264px;width:71px;height:23px;overflow:hidden">
<div class="t" style="left:10px;top:5px;font-size:14px;transform:scaleX(1.0172)">2460735.7</div></div>
<div style="left:7px;top:310px;width:1842px;height:1px;background:#ebebeb;"></div>
<div style="left:11px;top:292px;width:13px;height:13px;background:#fff;border:1px solid #333;box-sizing:border-box;"></div>
<svg style="left:11px;top:292px;" width="13" height="13" viewBox="0 0 13 13"><path d="M2.3 6.2L5 9L10.6 3.3" fill="none" stroke="#333" stroke-width="1.3"/></svg>
<div class="t" style="left:45.80px;top:292px;font-size:14px;color:#000;transform:scaleX(0.9406);">D:\astap_test_files\variable_stars\STANDARD</div>
<div class="t" style="left:319.40px;top:292px;font-size:14px;color:#000;transform:scaleX(0.9123);">FIELDS\M</div>
<div class="t" style="left:383.30px;top:292px;font-size:14px;color:#000;transform:scaleX(0.9437);">67</div>
<div class="t" style="left:403.00px;top:292px;font-size:14px;color:#000;transform:scaleX(0.9429);">all</div>
<div class="t" style="left:420.80px;top:292px;font-size:14px;color:#000;transform:scaleX(0.9576);">filters</div>
<div class="t" style="left:457.00px;top:292px;font-size:14px;color:#000;transform:scaleX(1.0286);">from</div>
<div class="t" style="left:490.40px;top:292px;font-size:14px;color:#000;transform:scaleX(0.8614);">SGBO,</div>
<div class="t" style="left:532.90px;top:292px;font-size:14px;color:#000;">Great</div>
<div class="t" style="left:572.60px;top:292px;font-size:14px;color:#000;transform:scaleX(0.9152);">basin</div>
<div class="t" style="left:607.40px;top:292px;font-size:14px;color:#000;transform:scaleX(1.0333);">observatory\60\M</div>
<div class="t" style="left:723.30px;top:292px;font-size:14px;color:#000;">67SI-20250301at054817_-20-2X2-060-SI_cal.fit</div>
<div class="t" style="left:1096.00px;top:292px;font-size:14px;color:#000;transform:scaleX(0.9375);">60</div>
<div class="t" style="left:1190.00px;top:292px;font-size:14px;color:#000;transform:scaleX(1.0500);">-20</div>
<div class="t" style="left:1252.00px;top:292px;font-size:14px;color:#000;transform:scaleX(0.9355);">2 x 2</div>
<div class="t" style="left:1310.00px;top:292px;font-size:14px;color:#000;">2048</div>
<div class="t" style="left:1370.00px;top:292px;font-size:14px;color:#000;">2048</div>
<div class="t" style="left:1413.00px;top:292px;font-size:14px;color:#000;transform:scaleX(0.9600);">Light Frame</div>
<svg style="left:1583px;top:291px;" width="15" height="16" viewBox="0 0 15 16"><path d="M0 0H15L0 16Z" fill="#990000"/><path d="M15 0V16H0Z" fill="#000000"/></svg>
<div class="t" style="left:1606.00px;top:292px;font-size:14px;color:#000;transform:scaleX(0.8462);">SI</div>
<div class="t" style="left:1638.00px;top:292px;font-size:14px;color:#000;transform:scaleX(1.0308);">2025-03-01 05:48:17</div>
<div style="left:1778px;top:287px;width:71px;height:23px;overflow:hidden">
<div class="t" style="left:10px;top:5px;font-size:14px;transform:scaleX(1.0172)">2460735.7</div></div>
<div style="left:7px;top:333px;width:1842px;height:1px;background:#ebebeb;"></div>
<div style="left:11px;top:315px;width:13px;height:13px;background:#fff;border:1px solid #333;box-sizing:border-box;"></div>
<svg style="left:11px;top:315px;" width="13" height="13" viewBox="0 0 13 13"><path d="M2.3 6.2L5 9L10.6 3.3" fill="none" stroke="#333" stroke-width="1.3"/></svg>
<div class="t" style="left:45.80px;top:315px;font-size:14px;color:#000;transform:scaleX(0.9406);">D:\astap_test_files\variable_stars\STANDARD</div>
<div class="t" style="left:319.40px;top:315px;font-size:14px;color:#000;transform:scaleX(0.9123);">FIELDS\M</div>
<div class="t" style="left:383.30px;top:315px;font-size:14px;color:#000;transform:scaleX(0.9437);">67</div>
<div class="t" style="left:403.00px;top:315px;font-size:14px;color:#000;transform:scaleX(0.9429);">all</div>
<div class="t" style="left:420.80px;top:315px;font-size:14px;color:#000;transform:scaleX(0.9576);">filters</div>
<div class="t" style="left:457.00px;top:315px;font-size:14px;color:#000;transform:scaleX(1.0286);">from</div>
<div class="t" style="left:490.40px;top:315px;font-size:14px;color:#000;transform:scaleX(0.8614);">SGBO,</div>
<div class="t" style="left:532.90px;top:315px;font-size:14px;color:#000;">Great</div>
<div class="t" style="left:572.60px;top:315px;font-size:14px;color:#000;transform:scaleX(0.9152);">basin</div>
<div class="t" style="left:607.40px;top:315px;font-size:14px;color:#000;transform:scaleX(1.0333);">observatory\60\M</div>
<div class="t" style="left:723.30px;top:315px;font-size:14px;color:#000;transform:scaleX(0.9931);">67SR-20250302at041528_-20-2X2-060-SR.fts</div>
<div class="t" style="left:1096.00px;top:315px;font-size:14px;color:#000;transform:scaleX(0.9375);">60</div>
<div class="t" style="left:1190.00px;top:315px;font-size:14px;color:#000;transform:scaleX(1.0500);">-20</div>
<div class="t" style="left:1252.00px;top:315px;font-size:14px;color:#000;transform:scaleX(0.9355);">2 x 2</div>
<div class="t" style="left:1310.00px;top:315px;font-size:14px;color:#000;">2048</div>
<div class="t" style="left:1370.00px;top:315px;font-size:14px;color:#000;">2048</div>
<div class="t" style="left:1413.00px;top:315px;font-size:14px;color:#000;transform:scaleX(0.9600);">Light Frame</div>
<svg style="left:1583px;top:314px;" width="15" height="16" viewBox="0 0 15 16"><path d="M0 0H15L0 16Z" fill="#ffc000"/><path d="M15 0V16H0Z" fill="#ff0000"/></svg>
<div class="t" style="left:1606.00px;top:315px;font-size:14px;color:#000;transform:scaleX(0.7895);">SR</div>
<div class="t" style="left:1638.00px;top:315px;font-size:14px;color:#000;transform:scaleX(1.0308);">2025-03-02 04:15:28</div>
<div style="left:1778px;top:310px;width:71px;height:23px;overflow:hidden">
<div class="t" style="left:10px;top:5px;font-size:14px;transform:scaleX(1.0172)">2460736.6</div></div>
<div style="left:7px;top:356px;width:1842px;height:1px;background:#ebebeb;"></div>
<div style="left:11px;top:338px;width:13px;height:13px;background:#fff;border:1px solid #333;box-sizing:border-box;"></div>
<svg style="left:11px;top:338px;" width="13" height="13" viewBox="0 0 13 13"><path d="M2.3 6.2L5 9L10.6 3.3" fill="none" stroke="#333" stroke-width="1.3"/></svg>
<div class="t" style="left:45.80px;top:338px;font-size:14px;color:#000;transform:scaleX(0.9406);">D:\astap_test_files\variable_stars\STANDARD</div>
<div class="t" style="left:319.40px;top:338px;font-size:14px;color:#000;transform:scaleX(0.9123);">FIELDS\M</div>
<div class="t" style="left:383.30px;top:338px;font-size:14px;color:#000;transform:scaleX(0.9437);">67</div>
<div class="t" style="left:403.00px;top:338px;font-size:14px;color:#000;transform:scaleX(0.9429);">all</div>
<div class="t" style="left:420.80px;top:338px;font-size:14px;color:#000;transform:scaleX(0.9576);">filters</div>
<div class="t" style="left:457.00px;top:338px;font-size:14px;color:#000;transform:scaleX(1.0286);">from</div>
<div class="t" style="left:490.40px;top:338px;font-size:14px;color:#000;transform:scaleX(0.8614);">SGBO,</div>
<div class="t" style="left:532.90px;top:338px;font-size:14px;color:#000;">Great</div>
<div class="t" style="left:572.60px;top:338px;font-size:14px;color:#000;transform:scaleX(0.9152);">basin</div>
<div class="t" style="left:607.40px;top:338px;font-size:14px;color:#000;transform:scaleX(1.0333);">observatory\60\M</div>
<div class="t" style="left:723.30px;top:338px;font-size:14px;color:#000;transform:scaleX(0.9931);">67SR-20250302at041645_-20-2X2-060-SR.fts</div>
<div class="t" style="left:1096.00px;top:338px;font-size:14px;color:#000;transform:scaleX(0.9375);">60</div>
<div class="t" style="left:1190.00px;top:338px;font-size:14px;color:#000;transform:scaleX(1.0500);">-20</div>
<div class="t" style="left:1252.00px;top:338px;font-size:14px;color:#000;transform:scaleX(0.9355);">2 x 2</div>
<div class="t" style="left:1310.00px;top:338px;font-size:14px;color:#000;">2048</div>
<div class="t" style="left:1370.00px;top:338px;font-size:14px;color:#000;">2048</div>
<div class="t" style="left:1413.00px;top:338px;font-size:14px;color:#000;transform:scaleX(0.9600);">Light Frame</div>
<svg style="left:1583px;top:337px;" width="15" height="16" viewBox="0 0 15 16"><path d="M0 0H15L0 16Z" fill="#ffc000"/><path d="M15 0V16H0Z" fill="#ff0000"/></svg>
<div class="t" style="left:1606.00px;top:338px;font-size:14px;color:#000;transform:scaleX(0.7895);">SR</div>
<div class="t" style="left:1638.00px;top:338px;font-size:14px;color:#000;transform:scaleX(1.0308);">2025-03-02 04:16:45</div>
<div style="left:1778px;top:333px;width:71px;height:23px;overflow:hidden">
<div class="t" style="left:10px;top:5px;font-size:14px;transform:scaleX(1.0172)">2460736.6</div></div>
<div style="left:7px;top:379px;width:1842px;height:1px;background:#ebebeb;"></div>
<div style="left:11px;top:361px;width:13px;height:13px;background:#fff;border:1px solid #333;box-sizing:border-box;"></div>
<svg style="left:11px;top:361px;" width="13" height="13" viewBox="0 0 13 13"><path d="M2.3 6.2L5 9L10.6 3.3" fill="none" stroke="#333" stroke-width="1.3"/></svg>
<div class="t" style="left:45.80px;top:361px;font-size:14px;color:#000;transform:scaleX(0.9406);">D:\astap_test_files\variable_stars\STANDARD</div>
<div class="t" style="left:319.40px;top:361px;font-size:14px;color:#000;transform:scaleX(0.9123);">FIELDS\M</div>
<div class="t" style="left:383.30px;top:361px;font-size:14px;color:#000;transform:scaleX(0.9437);">67</div>
<div class="t" style="left:403.00px;top:361px;font-size:14px;color:#000;transform:scaleX(0.9429);">all</div>
<div class="t" style="left:420.80px;top:361px;font-size:14px;color:#000;transform:scaleX(0.9576);">filters</div>
<div class="t" style="left:457.00px;top:361px;font-size:14px;color:#000;transform:scaleX(1.0286);">from</div>
<div class="t" style="left:490.40px;top:361px;font-size:14px;color:#000;transform:scaleX(0.8614);">SGBO,</div>
<div class="t" style="left:532.90px;top:361px;font-size:14px;color:#000;">Great</div>
<div class="t" style="left:572.60px;top:361px;font-size:14px;color:#000;transform:scaleX(0.9152);">basin</div>
<div class="t" style="left:607.40px;top:361px;font-size:14px;color:#000;transform:scaleX(1.0333);">observatory\60\M</div>
<div class="t" style="left:723.30px;top:361px;font-size:14px;color:#000;transform:scaleX(0.9931);">67SR-20250302at041802_-20-2X2-060-SR.fts</div>
<div class="t" style="left:1096.00px;top:361px;font-size:14px;color:#000;transform:scaleX(0.9375);">60</div>
<div class="t" style="left:1190.00px;top:361px;font-size:14px;color:#000;transform:scaleX(1.0500);">-20</div>
<div class="t" style="left:1252.00px;top:361px;font-size:14px;color:#000;transform:scaleX(0.9355);">2 x 2</div>
<div class="t" style="left:1310.00px;top:361px;font-size:14px;color:#000;">2048</div>
<div class="t" style="left:1370.00px;top:361px;font-size:14px;color:#000;">2048</div>
<div class="t" style="left:1413.00px;top:361px;font-size:14px;color:#000;transform:scaleX(0.9600);">Light Frame</div>
<svg style="left:1583px;top:360px;" width="15" height="16" viewBox="0 0 15 16"><path d="M0 0H15L0 16Z" fill="#ffc000"/><path d="M15 0V16H0Z" fill="#ff0000"/></svg>
<div class="t" style="left:1606.00px;top:361px;font-size:14px;color:#000;transform:scaleX(0.7895);">SR</div>
<div class="t" style="left:1638.00px;top:361px;font-size:14px;color:#000;transform:scaleX(1.0308);">2025-03-02 04:18:02</div>
<div style="left:1778px;top:356px;width:71px;height:23px;overflow:hidden">
<div class="t" style="left:10px;top:5px;font-size:14px;transform:scaleX(1.0172)">2460736.6</div></div>
<div style="left:7px;top:402px;width:1842px;height:1px;background:#ebebeb;"></div>
<div style="left:11px;top:384px;width:13px;height:13px;background:#fff;border:1px solid #333;box-sizing:border-box;"></div>
<svg style="left:11px;top:384px;" width="13" height="13" viewBox="0 0 13 13"><path d="M2.3 6.2L5 9L10.6 3.3" fill="none" stroke="#333" stroke-width="1.3"/></svg>
<div class="t" style="left:45.80px;top:384px;font-size:14px;color:#000;transform:scaleX(0.9406);">D:\astap_test_files\variable_stars\STANDARD</div>
<div class="t" style="left:319.40px;top:384px;font-size:14px;color:#000;transform:scaleX(0.9123);">FIELDS\M</div>
<div class="t" style="left:383.30px;top:384px;font-size:14px;color:#000;transform:scaleX(0.9437);">67</div>
<div class="t" style="left:403.00px;top:384px;font-size:14px;color:#000;transform:scaleX(0.9429);">all</div>
<div class="t" style="left:420.80px;top:384px;font-size:14px;color:#000;transform:scaleX(0.9576);">filters</div>
<div class="t" style="left:457.00px;top:384px;font-size:14px;color:#000;transform:scaleX(1.0286);">from</div>
<div class="t" style="left:490.40px;top:384px;font-size:14px;color:#000;transform:scaleX(0.8614);">SGBO,</div>
<div class="t" style="left:532.90px;top:384px;font-size:14px;color:#000;">Great</div>
<div class="t" style="left:572.60px;top:384px;font-size:14px;color:#000;transform:scaleX(0.9152);">basin</div>
<div class="t" style="left:607.40px;top:384px;font-size:14px;color:#000;transform:scaleX(1.0333);">observatory\60\M</div>
<div class="t" style="left:723.30px;top:384px;font-size:14px;color:#000;transform:scaleX(0.9931);">67SR-20250302at041919_-20-2X2-060-SR.fts</div>
<div class="t" style="left:1096.00px;top:384px;font-size:14px;color:#000;transform:scaleX(0.9375);">60</div>
<div class="t" style="left:1190.00px;top:384px;font-size:14px;color:#000;transform:scaleX(1.0500);">-20</div>
<div class="t" style="left:1252.00px;top:384px;font-size:14px;color:#000;transform:scaleX(0.9355);">2 x 2</div>
<div class="t" style="left:1310.00px;top:384px;font-size:14px;color:#000;">2048</div>
<div class="t" style="left:1370.00px;top:384px;font-size:14px;color:#000;">2048</div>
<div class="t" style="left:1413.00px;top:384px;font-size:14px;color:#000;transform:scaleX(0.9600);">Light Frame</div>
<svg style="left:1583px;top:383px;" width="15" height="16" viewBox="0 0 15 16"><path d="M0 0H15L0 16Z" fill="#ffc000"/><path d="M15 0V16H0Z" fill="#ff0000"/></svg>
<div class="t" style="left:1606.00px;top:384px;font-size:14px;color:#000;transform:scaleX(0.7895);">SR</div>
<div class="t" style="left:1638.00px;top:384px;font-size:14px;color:#000;transform:scaleX(1.0308);">2025-03-02 04:19:19</div>
<div style="left:1778px;top:379px;width:71px;height:23px;overflow:hidden">
<div class="t" style="left:10px;top:5px;font-size:14px;transform:scaleX(1.0172)">2460736.6</div></div>
<div style="left:7px;top:425px;width:1842px;height:1px;background:#ebebeb;"></div>
<div style="left:11px;top:407px;width:13px;height:13px;background:#fff;border:1px solid #333;box-sizing:border-box;"></div>
<svg style="left:11px;top:407px;" width="13" height="13" viewBox="0 0 13 13"><path d="M2.3 6.2L5 9L10.6 3.3" fill="none" stroke="#333" stroke-width="1.3"/></svg>
<div class="t" style="left:45.80px;top:407px;font-size:14px;color:#000;transform:scaleX(0.9406);">D:\astap_test_files\variable_stars\STANDARD</div>
<div class="t" style="left:319.40px;top:407px;font-size:14px;color:#000;transform:scaleX(0.9123);">FIELDS\M</div>
<div class="t" style="left:383.30px;top:407px;font-size:14px;color:#000;transform:scaleX(0.9437);">67</div>
<div class="t" style="left:403.00px;top:407px;font-size:14px;color:#000;transform:scaleX(0.9429);">all</div>
<div class="t" style="left:420.80px;top:407px;font-size:14px;color:#000;transform:scaleX(0.9576);">filters</div>
<div class="t" style="left:457.00px;top:407px;font-size:14px;color:#000;transform:scaleX(1.0286);">from</div>
<div class="t" style="left:490.40px;top:407px;font-size:14px;color:#000;transform:scaleX(0.8614);">SGBO,</div>
<div class="t" style="left:532.90px;top:407px;font-size:14px;color:#000;">Great</div>
<div class="t" style="left:572.60px;top:407px;font-size:14px;color:#000;transform:scaleX(0.9152);">basin</div>
<div class="t" style="left:607.40px;top:407px;font-size:14px;color:#000;transform:scaleX(1.0333);">observatory\60\M</div>
<div class="t" style="left:723.30px;top:407px;font-size:14px;color:#000;transform:scaleX(0.9931);">67SR-20250302at042036_-20-2X2-060-SR.fts</div>
<div class="t" style="left:1096.00px;top:407px;font-size:14px;color:#000;transform:scaleX(0.9375);">60</div>
<div class="t" style="left:1190.00px;top:407px;font-size:14px;color:#000;transform:scaleX(1.0500);">-20</div>
<div class="t" style="left:1252.00px;top:407px;font-size:14px;color:#000;transform:scaleX(0.9355);">2 x 2</div>
<div class="t" style="left:1310.00px;top:407px;font-size:14px;color:#000;">2048</div>
<div class="t" style="left:1370.00px;top:407px;font-size:14px;color:#000;">2048</div>
<div class="t" style="left:1413.00px;top:407px;font-size:14px;color:#000;transform:scaleX(0.9600);">Light Frame</div>
<div style="left:1583px;top:403px;width:17px;height:22px;background:#ffffff;"></div>
<svg style="left:1583px;top:406px;" width="15" height="16" viewBox="0 0 15 16"><path d="M0 0H15L0 16Z" fill="#b5a638"/><path d="M15 0V16H0Z" fill="#be1e3a"/></svg>
<div class="t" style="left:1606.00px;top:407px;font-size:14px;color:#000;transform:scaleX(0.7895);">SR</div>
<div class="t" style="left:1638.00px;top:407px;font-size:14px;color:#000;transform:scaleX(1.0308);">2025-03-02 04:20:36</div>
<div style="left:1778px;top:402px;width:71px;height:23px;overflow:hidden">
<div class="t" style="left:10px;top:5px;font-size:14px;transform:scaleX(1.0172)">2460736.6</div></div>
<div style="left:7px;top:448px;width:1842px;height:1px;background:#ebebeb;"></div>
<div style="left:11px;top:430px;width:13px;height:13px;background:#fff;border:1px solid #333;box-sizing:border-box;"></div>
<div class="t" style="left:45.80px;top:430px;font-size:14px;color:#000;transform:scaleX(0.9406);">D:\astap_test_files\variable_stars\STANDARD</div>
<div class="t" style="left:319.40px;top:430px;font-size:14px;color:#000;transform:scaleX(0.9123);">FIELDS\M</div>
<div class="t" style="left:383.30px;top:430px;font-size:14px;color:#000;transform:scaleX(0.9437);">67</div>
<div class="t" style="left:403.00px;top:430px;font-size:14px;color:#000;transform:scaleX(0.9429);">all</div>
<div class="t" style="left:420.80px;top:430px;font-size:14px;color:#000;transform:scaleX(0.9576);">filters</div>
<div class="t" style="left:457.00px;top:430px;font-size:14px;color:#000;transform:scaleX(1.0286);">from</div>
<div class="t" style="left:490.40px;top:430px;font-size:14px;color:#000;transform:scaleX(0.8614);">SGBO,</div>
<div class="t" style="left:532.90px;top:430px;font-size:14px;color:#000;">Great</div>
<div class="t" style="left:572.60px;top:430px;font-size:14px;color:#000;transform:scaleX(0.9152);">basin</div>
<div class="t" style="left:607.40px;top:430px;font-size:14px;color:#000;transform:scaleX(1.0333);">observatory\60\M</div>
<div class="t" style="left:723.30px;top:430px;font-size:14px;color:#000;transform:scaleX(1.0138);">67V-20250131at025059_-20-2X2-060-V_cal.fit</div>
<div style="left:1037px;top:149px;width:1px;height:299px;background:#ebebeb;"></div>
<div style="left:1117px;top:149px;width:1px;height:299px;background:#ebebeb;"></div>
<div style="left:1217px;top:149px;width:1px;height:299px;background:#ebebeb;"></div>
<div style="left:1287px;top:149px;width:1px;height:299px;background:#ebebeb;"></div>
<div style="left:1347px;top:149px;width:1px;height:299px;background:#ebebeb;"></div>
<div style="left:1407px;top:149px;width:1px;height:299px;background:#ebebeb;"></div>
<div style="left:1492px;top:149px;width:1px;height:299px;background:#ebebeb;"></div>
<div style="left:1582px;top:149px;width:1px;height:299px;background:#ebebeb;"></div>
<div style="left:1632px;top:149px;width:1px;height:299px;background:#ebebeb;"></div>
<div style="left:1778px;top:149px;width:1px;height:299px;background:#ebebeb;"></div>
<div style="left:1849px;top:125px;width:17px;height:324px;background:#f0f0f0;"></div>
<svg style="left:1853px;top:132px;" width="8" height="7" viewBox="0 0 8 7"><path d="M1 6L4 2.5L7 6" fill="none" stroke="#606060" stroke-width="2"/></svg>
<div style="left:1850px;top:291px;width:15px;height:98px;background:#cdcdcd;"></div>
<svg style="left:1853px;top:437px;" width="8" height="7" viewBox="0 0 8 7"><path d="M1 1L4 4.5L7 1" fill="none" stroke="#606060" stroke-width="2"/></svg>
<div style="left:6px;top:449px;width:1860px;height:17px;background:#f0f0f0;"></div>
<div style="left:24px;top:450px;width:32px;height:14px;background:#cdcdcd;"></div>
<svg style="left:11px;top:453px;" width="8" height="7" viewBox="0 0 8 7"><path d="M6 0.5L2.5 3.5L6 6.5" fill="none" stroke="#606060" stroke-width="2"/></svg>
<svg style="left:1836px;top:453px;" width="8" height="7" viewBox="0 0 8 7"><path d="M2 0.5L5.5 3.5L2 6.5" fill="none" stroke="#606060" stroke-width="2"/></svg>
<div style="left:1778px;top:126px;width:71px;height:23px;overflow:hidden">
<div class="t" style="left:11px;top:4px;font-size:14px;transform:scaleX(0.97)">JD (midpoint)</div></div>
<div style="left:2px;top:476px;width:426px;height:1px;background:#ffffff;"></div>
<div style="left:1105px;top:476px;width:761px;height:1px;background:#ffffff;"></div>
<div style="left:921px;top:474px;width:2px;height:1px;background:#a0a0a0;"></div>
<div style="left:925px;top:474px;width:2px;height:1px;background:#a0a0a0;"></div>
<div style="left:929px;top:474px;width:2px;height:1px;background:#a0a0a0;"></div>
<div style="left:933px;top:474px;width:2px;height:1px;background:#a0a0a0;"></div>
<div style="left:937px;top:474px;width:2px;height:1px;background:#a0a0a0;"></div>
<div style="left:941px;top:474px;width:2px;height:1px;background:#a0a0a0;"></div>
<div style="left:945px;top:474px;width:2px;height:1px;background:#a0a0a0;"></div>
<div style="left:949px;top:474px;width:2px;height:1px;background:#a0a0a0;"></div>
<div style="left:10px;top:485px;width:274px;height:39px;background:#cccccc;border:1px solid #c4c4c4;box-sizing:border-box;"></div>
<svg style="left:68px;top:497px;" width="15" height="14" viewBox="0 0 15 14"><rect x="0.5" y="0.5" width="8" height="9" fill="#d8d8d8" stroke="#8a8a8a"/><rect x="2.5" y="2.5" width="8" height="9" fill="#b8b8b8" stroke="#8a8a8a"/><rect x="5" y="4.5" width="9" height="9.5" fill="#8a8a8a"/></svg>
<div class="t" style="left:87.00px;top:497px;font-size:14px;color:#838383;transform:scaleX(0.8954);">STACK LRGB (Average)</div>
<div class="t" style="left:298.00px;top:486px;font-size:14px;color:#000;transform:scaleX(0.9274);">Press ESC to abort.</div>
<div style="left:428px;top:485px;width:677px;height:50px;border:1px solid #dcdcdc;box-sizing:border-box;"></div>
<div style="left:432px;top:480px;width:71px;height:8px;background:#f0f0f0;"></div>
<div class="t" style="left:437.00px;top:478px;font-size:14px;color:#000;transform:scaleX(0.9265);">Classify by</div>
<div style="left:500px;top:495px;width:600px;height:19px;overflow:hidden">
</div>
<div style="left:502px;top:501px;width:13px;height:13px;background:#fff;border:1px solid #333;box-sizing:border-box;"></div>
<svg style="left:502px;top:501px;" width="13" height="13" viewBox="0 0 13 13"><path d="M2.3 6.2L5 9L10.6 3.3" fill="none" stroke="#333" stroke-width="1.3"/></svg>
<div style="left:502px;top:519px;width:13px;height:13px;background:#fff;border:1px solid #333;box-sizing:border-box;"></div>
<div style="left:638px;top:501px;width:13px;height:13px;background:#fff;border:1px solid #333;box-sizing:border-box;"></div>
<div style="left:638px;top:519px;width:13px;height:13px;background:#fff;border:1px solid #333;box-sizing:border-box;"></div>
<div style="left:830px;top:501px;width:13px;height:13px;background:#fff;border:1px solid #333;box-sizing:border-box;"></div>
<div style="left:830px;top:519px;width:13px;height:13px;background:#fff;border:1px solid #333;box-sizing:border-box;"></div>
<svg style="left:830px;top:519px;" width="13" height="13" viewBox="0 0 13 13"><path d="M2.3 6.2L5 9L10.6 3.3" fill="none" stroke="#333" stroke-width="1.3"/></svg>
<div style="left:515px;top:495px;width:450px;height:18px;overflow:hidden">
<div class="t" style="left:5.00px;top:5px;font-size:14px;color:#000;">Light filter</div>
<div class="t" style="left:141.00px;top:5px;font-size:14px;color:#000;transform:scaleX(0.9862);">Dark exposure duration</div>
<div class="t" style="left:333.00px;top:5px;font-size:14px;color:#000;transform:scaleX(0.9908);">Dark temperature</div>
</div>
<div class="t" style="left:520.00px;top:518px;font-size:14px;color:#000;transform:scaleX(0.9861);">Light object</div>
<div class="t" style="left:656.00px;top:518px;font-size:14px;color:#000;transform:scaleX(0.9667);">Dark gain</div>
<div class="t" style="left:848.00px;top:518px;font-size:14px;color:#000;transform:scaleX(0.9630);">Flat filter</div>
<div class="t" style="left:1122.00px;top:495px;font-size:21px;color:#0000ff;transform:scaleX(0.6667);">?</div>
<div style="left:1177px;top:489px;width:13px;height:13px;background:#fff;border:1px solid #333;box-sizing:border-box;"></div>
<div class="t" style="left:1194.00px;top:488px;font-size:14px;color:#000;transform:scaleX(0.9889);">Power down after completion</div>
<div style="left:1177px;top:513px;width:13px;height:13px;background:#fff;border:1px solid #333;box-sizing:border-box;"></div>
<div class="t" style="left:1194.00px;top:512px;font-size:14px;color:#000;transform:scaleX(0.9737);">Write stack log file</div>
<div style="left:1px;top:539px;width:1870px;height:225px;background:#ffffff;"></div>
<div style="left:1px;top:539px;width:1870px;height:2px;background:#828282;"></div>
<div style="left:1px;top:539px;width:1px;height:225px;background:#828282;"></div>
<div style="left:1869px;top:539px;width:2px;height:225px;background:#828282;"></div>
<div style="left:1px;top:762px;width:1870px;height:2px;background:#828282;"></div>
<div class="t" style="left:4.50px;top:545px;font-size:14px;color:#000;transform:scaleX(0.9545);">23:55:14</div>
<div class="t" style="left:67.00px;top:545px;font-size:14px;color:#000;transform:scaleX(0.9786);">Using local variable database. Online version can be set in tab Photometry</div>
<div class="t" style="left:4.50px;top:564px;font-size:14px;color:#000;transform:scaleX(0.9545);">23:55:14</div>
<div class="t" style="left:67.00px;top:564px;font-size:14px;color:#000;transform:scaleX(0.9926);">Added 203 annotations.</div>
<div class="t" style="left:4.50px;top:583px;font-size:14px;color:#000;transform:scaleX(0.9545);">23:55:15</div>
<div class="t" style="left:66.70px;top:583px;font-size:14px;color:#000;transform:scaleX(0.9862);">Gaia online with database transformation as set in tab</div>
<div class="t" style="left:400.40px;top:583px;font-size:14px;color:#000;transform:scaleX(0.9730);">Photometry.</div>
<div class="t" style="left:476.70px;top:583px;font-size:14px;color:#000;transform:scaleX(0.9746);">Filter=SR.</div>
<div class="t" style="left:542.40px;top:583px;font-size:14px;color:#000;transform:scaleX(0.9581);">Online Gaia</div>
<div class="t" style="left:617.60px;top:583px;font-size:14px;color:#000;transform:scaleX(0.9406);">-&gt;SR</div>
<div class="t" style="left:4.50px;top:602px;font-size:14px;color:#000;transform:scaleX(0.9545);">23:55:16</div>
<div class="t" style="left:66.40px;top:602px;font-size:14px;color:#000;transform:scaleX(0.9889);">Photometry calibration for POINT</div>
<div class="t" style="left:275.40px;top:602px;font-size:14px;color:#000;transform:scaleX(0.8859);">SOURCES successful.</div>
<div class="t" style="left:405.50px;top:602px;font-size:14px;color:#000;transform:scaleX(0.9644);">433 Gaia stars used for</div>
<div class="t" style="left:550.60px;top:602px;font-size:14px;color:#000;transform:scaleX(0.9710);">flux calibration.</div>
<div class="t" style="left:650.40px;top:602px;font-size:14px;color:#000;transform:scaleX(0.9766);">Flux aperture diameter:</div>
<div class="t" style="left:796.30px;top:602px;font-size:14px;color:#000;transform:scaleX(0.9561);">12.33 pixels. Standard</div>
<div class="t" style="left:933.50px;top:602px;font-size:14px;color:#000;transform:scaleX(0.9689);">error MZERO [magn]:</div>
<div class="t" style="left:1068.60px;top:602px;font-size:14px;color:#000;transform:scaleX(0.9850);">0.001%. Annulus inner</div>
<div class="t" style="left:1210.80px;top:602px;font-size:14px;color:#000;transform:scaleX(0.9612);">diameter: 41 pixels.</div>
<div class="t" style="left:1331.40px;top:602px;font-size:14px;color:#000;transform:scaleX(0.9587);">Stars with pixel values</div>
<div class="t" style="left:1468.00px;top:602px;font-size:14px;color:#000;transform:scaleX(0.9888);">close to 50837 are ignored.</div>
<div class="t" style="left:4.50px;top:621px;font-size:14px;color:#000;transform:scaleX(0.9545);">23:55:16</div>
<div class="t" style="left:66.40px;top:621px;font-size:14px;color:#000;transform:scaleX(0.9935);">Photometric calibration is only</div>
<div class="t" style="left:255.50px;top:621px;font-size:14px;color:#000;">valid if the filter</div>
<div class="t" style="left:354.00px;top:621px;font-size:14px;color:#000;transform:scaleX(0.9632);">passband (SR) is compatible with the</div>
<div class="t" style="left:580.80px;top:621px;font-size:14px;color:#000;transform:scaleX(0.9468);">passband reference</div>
<div class="t" style="left:702.50px;top:621px;font-size:14px;color:#000;transform:scaleX(0.9152);">database (SR). This is</div>
<div class="t" style="left:833.10px;top:621px;font-size:14px;color:#000;transform:scaleX(0.9908);">indicated by the</div>
<div class="t" style="left:934.50px;top:621px;font-size:14px;color:#000;transform:scaleX(0.9708);">coloured square icons</div>
<div class="t" style="left:1071.80px;top:621px;font-size:14px;color:#000;transform:scaleX(1.0225);">in tab photometry.</div>
<div class="t" style="left:4.50px;top:640px;font-size:14px;color:#000;transform:scaleX(0.9545);">23:55:16</div>
<div class="t" style="left:67.00px;top:640px;font-size:14px;color:#000;transform:scaleX(0.9967);">Limiting magnitude is 18.06 ( σ=0.0011, SNR=7, aperture Ø1.8) Saturation at ≈ 10.9</div>
<div class="t" style="left:4.50px;top:659px;font-size:14px;color:#000;transform:scaleX(0.9545);">23:55:16</div>
<div class="t" style="left:67.00px;top:659px;font-size:14px;color:#000;transform:scaleX(0.9899);">Detected a total 199 stars</div>
<div class="t" style="left:4.50px;top:678px;font-size:14px;color:#000;transform:scaleX(0.9545);">23:55:16</div>
<div class="t" style="left:67.00px;top:678px;font-size:14px;color:#000;transform:scaleX(0.9786);">Using local variable database. Online version can be set in tab Photometry</div>
<div class="t" style="left:4.50px;top:697px;font-size:14px;color:#000;transform:scaleX(0.9545);">23:55:17</div>
<div class="t" style="left:67.00px;top:697px;font-size:14px;color:#000;transform:scaleX(0.9926);">Added 203 annotations.</div>
<div class="t" style="left:4.50px;top:716px;font-size:14px;color:#000;transform:scaleX(0.9545);">23:55:17</div>
<div class="t" style="left:67.00px;top:716px;font-size:14px;color:#000;transform:scaleX(0.9721);">Measurements completed.</div>
<div style="left:1853px;top:541px;width:16px;height:221px;background:#f0f0f0;"></div>
<svg style="left:1856px;top:548px;" width="8" height="7" viewBox="0 0 8 7"><path d="M1 6L4 2.5L7 6" fill="none" stroke="#606060" stroke-width="2"/></svg>
<div style="left:1853px;top:728px;width:15px;height:17px;background:#cdcdcd;"></div>
<svg style="left:1856px;top:751px;" width="8" height="7" viewBox="0 0 8 7"><path d="M1 1L4 4.5L7 1" fill="none" stroke="#606060" stroke-width="2"/></svg>
<svg style="left:0;top:0" width="1872" height="140" viewBox="0 0 1872 140"><path d="M870.5 76C870.5 64 877 59.7 892 59.7L1078 59.7C1098 60.2 1107.2 64 1107.2 76L1107.2 110C1107.2 118 1098 122.5 1080 122.5L893 122.5C877 122.5 870.5 118 870.5 110Z" fill="none" stroke="#ed1c24" stroke-width="4.4"/><path d="M1107 101C1107 92 1112 89.1 1123 89.1L1237 89.1C1249 89.1 1253.9 93 1253.9 102L1253.9 114C1253.9 123 1249 126.6 1237 126.6L1123 126.6C1112 126.6 1107 123 1107 114Z" fill="none" stroke="#22b14c" stroke-width="4.2"/></svg></body></html>
